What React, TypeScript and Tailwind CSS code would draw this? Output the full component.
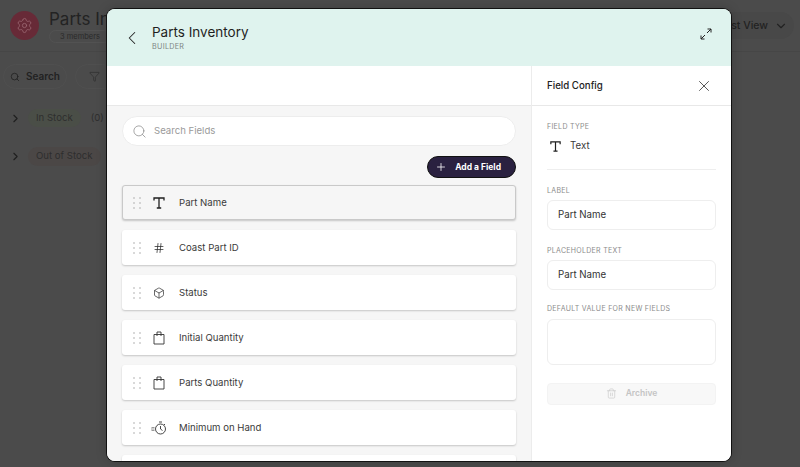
import { ChevronDown, ChevronLeft, ChevronRight, Filter, Hash, Plus, Search, Settings, Trash2, Box, X } from 'lucide-react';
import type { ReactNode } from 'react';

const fontFamily = 'font-[Inter,sans-serif]';

const TextIcon = ({ className }: { className: string }) => (
    <svg viewBox="0 0 14 14" className={className} fill="none" stroke="#1f1f1f">
        <path d="M2 4.5V2h10v2.5M7 2v10M4.8 12h4.4" strokeWidth="1.3" />
    </svg>
);

const BagIcon = () => (
    <svg viewBox="0 0 12 14" className="h-[14px] w-3" fill="none" stroke="#333" strokeWidth="0.9">
        <path d="M1 3.5h10v9.5H1zM4 5V1h4v4" />
    </svg>
);

const ExpandIcon = () => (
    <svg viewBox="0 0 12 12" className="h-3 w-3" fill="none" stroke="#222" strokeWidth="1">
        <path d="M7 5l4-4M7.5 1H11v3.5M5 7l-4 4M1 7.5V11h3.5" />
    </svg>
);

const MinimumIcon = () => (
    <svg viewBox="0 0 16 14" className="h-[14px] w-4" fill="none" stroke="#333" strokeWidth="0.9">
        <path d="M0.5 6.5h3M0 8h3.5M0.5 9.5h3" strokeWidth="0.5" />
        <circle cx="9.5" cy="8" r="5" />
        <path d="M9.5 5v3l2 1.5M8 1h3M13 3l1 1" />
    </svg>
);

const GripDots = () => (
    <svg viewBox="0 0 8 12" className="h-3 w-2 shrink-0" fill="#a9a9a9">
        {[1, 6, 11].map((y) => (
            <g key={y}>
                <circle cx="1" cy={y} r="0.8" />
                <circle cx="7" cy={y} r="0.8" />
            </g>
        ))}
    </svg>
);

const fields: { name: string; icon: ReactNode }[] = [
    { name: 'Coast Part ID', icon: <Hash size={12} strokeWidth={1.5} color="#2a2a2a" /> },
    { name: 'Status', icon: <Box size={12} strokeWidth={1.4} color="#2a2a2a" /> },
    { name: 'Initial Quantity', icon: <BagIcon /> },
    { name: 'Parts Quantity', icon: <BagIcon /> },
    { name: 'Minimum on Hand', icon: <MinimumIcon /> },
];

const FieldRow = ({ name, icon, active }: { name: string; icon: ReactNode; active?: boolean }) => (
    <div
        className={`flex h-[35px] shrink-0 items-center rounded-[3px] shadow-[0_1px_2px_rgba(0,0,0,0.2)] ${
            active ? 'border border-[#c9c9c9] bg-[#f6f6f6] pl-[10px]' : 'bg-white pl-[11px]'
        }`}
    >
        <GripDots />
        <span className="ml-[8px] flex w-5 justify-center">{icon}</span>
        <span className="ml-[10px] pt-[1px] text-[9.6px] text-[#3a3a3a]">{name}</span>
    </div>
);

const ConfigLabel = ({ children }: { children: ReactNode }) => (
    <p className="text-[7px] leading-[10px] tracking-[0.3px] text-[#8b8b8b]">{children}</p>
);

const ConfigInput = ({ value }: { value: string }) => (
    <div className="mt-[4px] flex h-[30px] items-center rounded-md border border-[#eeeeee] pl-[10px] pt-[1px] text-[9.7px] text-[#333]">
        {value}
    </div>
);

const Background = () => (
    <div className="h-full bg-[#4b4b4b]">
        <div className="flex h-[52px] items-center justify-between border-b border-[#464646] pl-[10px] pr-[6px]">
            <div className="flex items-center gap-[10px]">
                <span className="flex h-[29px] w-[29px] items-center justify-center rounded-full bg-[#672a37]">
                    <Settings size={17} strokeWidth={1.2} color="#9a6570" />
                </span>
                <div>
                    <p className="text-[17px] leading-5 text-[#232323]">Parts Inventory</p>
                    <span className="mt-[1px] block w-fit rounded-full border border-[#525252] px-[10px] text-[7.5px] leading-[11px] text-[#2a2a2a]">
                        3 members
                    </span>
                </div>
            </div>
            <div className="flex h-[27px] items-center gap-[6px] rounded-full bg-[#484848] pl-4 pr-[6px] text-[10.5px] font-medium text-[#222]">
                List View <ChevronDown size={14} />
            </div>
        </div>
        <div className="flex items-center gap-2 pl-[3px] pt-[12px]">
            <div className="flex h-[25px] items-center gap-[6px] rounded-full border border-[#4f4f4f] px-[6px] text-[10px] font-semibold text-[#222]">
                <Search size={10} color="#222" /> Search
            </div>
            <div className="flex h-[25px] w-10 items-center justify-center rounded-full border border-[#4f4f4f]">
                <Filter size={11} strokeWidth={1.3} color="#2a2a2a" />
            </div>
        </div>
        <div className="flex items-center pl-[9px] pt-[20px]">
            <ChevronRight size={13} color="#1f1f1f" />
            <span className="ml-[6px] rounded-full bg-[#4a4e47] px-2 py-[2px] text-[9.6px] text-[#2e2e2e]">In Stock</span>
            <span className="ml-[10px] text-[9.6px] text-[#2e2e2e]">(0)</span>
        </div>
        <div className="flex items-center pl-[9px] pt-[20px]">
            <ChevronRight size={13} color="#1f1f1f" />
            <span className="ml-[6px] rounded-full bg-[#4b4746] px-2 py-[2px] text-[9.6px] text-[#2e2e2e]">Out of Stock</span>
        </div>
    </div>
);

const App = () => {
    return (
        <div className={`relative h-[467px] w-[800px] overflow-hidden ${fontFamily}`}>
            <Background />

            <div className="absolute left-[107px] top-[9px] flex h-[452px] w-[624px] flex-col overflow-hidden rounded-[8px] bg-white shadow-[0_0_0_1px_#111,0_0_12px_rgba(0,0,0,0.2)]">
                <header className="flex h-[57px] shrink-0 items-center justify-between bg-[#dff3ee] pl-[14px] pr-[19px]">
                    <div className="flex items-center gap-[9px]">
                        <ChevronLeft size={22} strokeWidth={1.1} color="#222" />
                        <div>
                            <p className="text-[13.5px] leading-[18px] text-[#1f1f1f]">Parts Inventory</p>
                            <p className="mt-[1px] text-[7.2px] leading-[10px] tracking-[0.3px] text-[#7d8583]">BUILDER</p>
                        </div>
                    </div>
                    <span className="-mt-[8px]">
                        <ExpandIcon />
                    </span>
                </header>

                <div className="flex min-h-0 flex-1">
                    <div className="flex w-[424px] shrink-0 flex-col bg-[#f6f6f6]">
                        <div className="h-[40px] shrink-0 border-b border-[#e8e8e8] bg-white" />
                        <div className="flex min-h-0 flex-1 flex-col overflow-hidden px-[15px] pt-[10px]">
                            <div className="flex h-[30px] shrink-0 items-center gap-[7px] rounded-full border border-[#ededed] bg-white pl-[9px] text-[9.6px] text-[#9a9a9a]">
                                <Search size={15} strokeWidth={1.2} color="#8a8a8a" />
                                <span>Search Fields</span>
                            </div>
                            <div className="mt-[10px] flex shrink-0 justify-end">
                                <button className="flex h-[22px] items-center gap-[8px] rounded-full border border-[#111] bg-[#2a2140] pl-[7px] pr-[14px] text-[8.5px] font-bold text-white">
                                    <Plus size={12} strokeWidth={1.6} />
                                    Add a Field
                                </button>
                            </div>
                            <div className="mt-[7px] flex flex-col gap-[10px]">
                                <FieldRow name="Part Name" active icon={<TextIcon className="h-[14px] w-[14px]" />} />
                                {fields.map((field) => (
                                    <FieldRow key={field.name} name={field.name} icon={field.icon} />
                                ))}
                                <FieldRow name="" icon={null} />
                            </div>
                        </div>
                    </div>

                    <aside className="flex-1 border-l border-[#ececec] bg-white">
                        <div className="flex h-[40px] items-center justify-between border-b border-[#e8e8e8] pl-[15px] pr-[18px]">
                            <p className="pt-[1px] text-[9.7px] font-medium text-[#222]">Field Config</p>
                            <X size={18} strokeWidth={1} color="#222" />
                        </div>
                        <div className="px-[15px] pt-[16px]">
                            <ConfigLabel>FIELD TYPE</ConfigLabel>
                            <div className="mt-[7px] flex items-center gap-[8px] border-b border-[#eeeeee] pb-[15px] text-[9.7px] text-[#3a3a3a]">
                                <TextIcon className="ml-[2px] h-[13px] w-[13px]" />
                                Text
                            </div>
                            <div className="mt-[16px]">
                                <ConfigLabel>LABEL</ConfigLabel>
                                <ConfigInput value="Part Name" />
                            </div>
                            <div className="mt-[16px]">
                                <ConfigLabel>PLACEHOLDER TEXT</ConfigLabel>
                                <ConfigInput value="Part Name" />
                            </div>
                            <div className="mt-[14px]">
                                <ConfigLabel>DEFAULT VALUE FOR NEW FIELDS</ConfigLabel>
                                <div className="mt-[5px] h-[46px] rounded-md border border-[#eeeeee]" />
                            </div>
                            <div className="mt-[18px] flex h-[22px] items-center justify-center gap-[9px] rounded border border-[#f3f3f3] bg-[#f8f8f8] text-[8.5px] font-semibold text-[#c4c4c4]">
                                <Trash2 size={11} strokeWidth={1.3} color="#c4c4c4" />
                                Archive
                            </div>
                        </div>
                    </aside>
                </div>
            </div>
        </div>
    );
};

export default App;
